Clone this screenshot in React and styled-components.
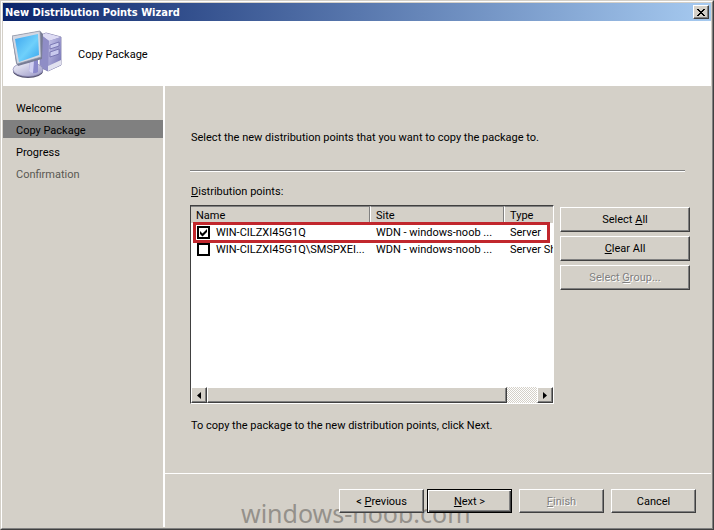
import React, { useState } from "react";
import styled, { createGlobalStyle, css } from "styled-components";

const FACE = "#d4d0c8";
const SHADOW = "#808080";
const DARK = "#404040";

const GlobalStyle = createGlobalStyle`
  * { box-sizing: border-box; }
  body {
    margin: 0;
    background: ${FACE};
    color: #000;
    font: 11px/14px Roboto, "Liberation Sans", sans-serif;
  }
  button, input, table { font: inherit; color: inherit; }
`;

const raised = css`
  border: 1px solid;
  border-color: #fff ${DARK} ${DARK} #fff;
  box-shadow: inset -1px -1px 0 ${SHADOW};
  background: ${FACE};
`;

const Frame = styled.div`
  min-height: 100vh;
  display: flex;
  border: 1px solid;
  border-color: ${FACE} ${DARK} ${DARK} ${FACE};
`;

const Window = styled.div`
  flex: 1;
  min-width: 0;
  display: flex;
  flex-direction: column;
  padding: 1px;
  border: 1px solid;
  border-color: #fff ${SHADOW} ${SHADOW} #fff;
`;

const TitleBar = styled.header`
  display: flex;
  align-items: center;
  justify-content: space-between;
  height: 18px;
  padding: 0 2px;
  background: linear-gradient(90deg, #0a246a, #a6caf0);
`;

const Title = styled.h1`
  margin: 0;
  padding-top: 1px;
  color: #fff;
  font: bold 11px/16px "DejaVu Sans Condensed", "DejaVu Sans", sans-serif;
`;

const CloseButton = styled.button`
  ${raised}
  display: grid;
  place-items: center;
  width: 16px;
  height: 14px;
  padding: 0;
`;

const Banner = styled.div`
  display: flex;
  align-items: center;
  gap: 14px;
  height: 65px;
  padding: 2px 8px 0 9px;
  background: #fff;
`;

const Step = styled.h2`
  margin: 0;
  padding-top: 1px;
  font-size: 11px;
  font-weight: normal;
`;

const Body = styled.div`
  flex: 1;
  display: flex;
`;

const Sidebar = styled.nav`
  flex: none;
  width: 162px;
  padding-top: 12px;
  border-right: 2px solid #fff;
`;

const Steps = styled.ol`
  margin: 0;
  padding: 0;
  list-style: none;
  display: grid;
  gap: 4px;
`;

const StepItem = styled.li`
  padding: 4px 12px 0 13px;
  color: ${(p) => (p.$dim ? "#5a5853" : "#000")};
  background: ${(p) => (p.$current ? SHADOW : "transparent")};
`;

const Content = styled.div`
  flex: 1;
  min-width: 0;
  display: flex;
  flex-direction: column;
`;

const Main = styled.main`
  flex: 1;
  padding: 45px 21px 0 25px;
`;

const Text = styled.p`
  margin: 0;
  padding-left: 1px;
`;

const Rule = styled.hr`
  margin: 25px 5px 13px 0;
  border: 0;
  border-top: 1px solid ${SHADOW};
  border-bottom: 1px solid #fff;
`;

const Picker = styled.div`
  display: flex;
  gap: 6px;
  margin: 6px 0 15px;
`;

const List = styled.div`
  position: relative;
  flex: 1;
  min-width: 0;
  height: 199px;
  display: flex;
  flex-direction: column;
  overflow: hidden;
  background: #fff;
  border: 1px solid;
  border-color: ${DARK} #fff #fff ${DARK};
  box-shadow: inset 0 1px 0 ${SHADOW};
`;

const Table = styled.table`
  width: 100%;
  table-layout: fixed;
  border-collapse: separate;
  border-spacing: 0;
`;

const HeadCell = styled.th`
  width: ${(p) => p.$width || "auto"};
  height: 17px;
  padding: 2px 5px 0;
  text-align: left;
  font-weight: normal;
  line-height: 14px;
  background: ${FACE};
  border-top: 1px solid ${SHADOW};
  border-right: ${(p) => (p.$width ? `1px solid ${SHADOW}` : "0")};
  border-left: ${(p) => (p.$first ? "0" : "1px solid #fff")};
`;

const Cell = styled.td`
  height: 17px;
  padding: 2px 0 0 6px;
  line-height: 15px;
  overflow: hidden;
  white-space: nowrap;
`;

const CheckLabel = styled.label`
  display: flex;
  align-items: center;
  gap: 6px;
`;

const Check = styled.input`
  appearance: none;
  flex: none;
  width: 13px;
  height: 13px;
  margin: 0;
  border: 2px solid #000;
  background: #fff;
  &:checked {
    background: #fff
      url("data:image/svg+xml,%3Csvg xmlns='http://www.w3.org/2000/svg' viewBox='0 0 9 9'%3E%3Cpath d='M1 3L3.5 5.5L8 1V4L3.5 8.5L1 6z'/%3E%3C/svg%3E")
      center / 9px 9px no-repeat;
  }
`;

const Highlight = styled.div`
  position: absolute;
  top: 16px;
  left: 2px;
  right: 3px;
  height: 21px;
  border: 3px solid #c1272d;
  pointer-events: none;
`;

const ScrollBar = styled.div`
  display: flex;
  height: 16px;
  margin-top: auto;
  background: repeating-conic-gradient(#fff 0 25%, ${FACE} 0 50%) 0 0 / 2px 2px;
`;

const ScrollArrow = styled.button`
  ${raised}
  display: grid;
  place-items: center;
  width: 16px;
  height: 16px;
  padding: 0;
`;

const Track = styled.div`
  flex: 1;
`;

const Thumb = styled.div`
  ${raised}
  width: 91%;
  height: 16px;
`;

const Actions = styled.div`
  flex: none;
  width: 130px;
  padding-top: 2px;
  display: flex;
  flex-direction: column;
  gap: 4px;
`;

const Button = styled.button`
  ${raised}
  position: relative;
  width: ${(p) => (p.$wide ? "100%" : "85px")};
  height: ${(p) => (p.$wide ? "25px" : "24px")};
  padding: 1px 0 0;
  line-height: 14px;
  ${(p) =>
    p.$primary &&
    css`
      border-color: #000;
      box-shadow: inset 1px 1px 0 #fff, inset -1px -1px 0 ${DARK}, inset -2px -2px 0 ${SHADOW};
    `}
  &:disabled {
    color: ${SHADOW};
    text-shadow: 1px 1px 0 #fff;
  }
`;

const Footer = styled.footer`
  position: relative;
  display: flex;
  justify-content: flex-end;
  gap: 7px;
  height: 54px;
  padding: 15px 15px 0 0;
  border-top: 1px solid #fff;
`;

const Pair = styled.div`
  display: flex;
  gap: 3px;
`;

const Watermark = styled.div`
  position: absolute;
  left: 76px;
  bottom: -3px;
  color: #94918b;
  font: 25px/34px "Noto Sans", "Open Sans", sans-serif;
`;

function ComputerIcon() {
  return (
    <svg width="52" height="50" viewBox="0 0 52 50" aria-hidden="true">
      <defs>
        <linearGradient id="screen" x1="0" y1="0" x2="1" y2="1">
          <stop offset="0" stopColor="#3da5ee" />
          <stop offset=".55" stopColor="#6fd0fb" />
          <stop offset="1" stopColor="#36a4ee" />
        </linearGradient>
        <linearGradient id="side" x1="0" y1="0" x2="1" y2="1">
          <stop offset="0" stopColor="#c9c8ec" />
          <stop offset="1" stopColor="#706eb0" />
        </linearGradient>
        <linearGradient id="base" x1="0" y1="0" x2="1" y2="1">
          <stop offset="0" stopColor="#f6f6fc" />
          <stop offset="1" stopColor="#9896c5" />
        </linearGradient>
      </defs>
      <path d="M29 5L34 3L49 7V35L36 41L28 37Z" fill="#8583bd" stroke="#5e5c91" strokeWidth=".7" />
      <path d="M29 5L34 3L49 7L37 11Z" fill="#dedcf4" />
      <path d="M29 5L37 11L36 41L28 37Z" fill="#8f8dc6" />
      <path d="M37 11L49 7V35L36 41Z" fill="url(#side)" />
      <path d="M38 15L47 12V16L38 19ZM38 22L47 19V24L38 27Z" fill="#c8c9ed" stroke="#6c6aa9" strokeWidth=".8" />
      <path d="M36 36L49 30V35L36 41Z" fill="#e1e1ef" />
      <ellipse cx="16" cy="41" rx="15" ry="7" fill="#55536f" />
      <ellipse cx="16" cy="39.5" rx="15" ry="7" fill="url(#base)" stroke="#8987b3" strokeWidth=".7" />
      <path d="M18 32L26 29L26 42Q21 45 17 41Z" fill="#8b89cb" />
      <path d="M18 32L22 31L21 43Q18 43 17 41Z" fill="#d1d0f1" />
      <path d="M0 6L28 1L31 4L30 29L6 36L4 33Z" fill="#777b94" />
      <path d="M0 6L28 1L29 27L5 34Z" fill="#d3d7e2" stroke="#8d93a5" strokeWidth=".7" />
      <path d="M3 9L26 4L27 25L7 32Z" fill="url(#screen)" />
    </svg>
  );
}

const POINTS = [
  { name: "WIN-CILZXI45G1Q", site: "WDN - windows-noob ...", type: "Server" },
  { name: "WIN-CILZXI45G1Q\\SMSPXEI...", site: "WDN - windows-noob ...", type: "Server Share" },
];

export default function App() {
  const [checked, setChecked] = useState([true, false]);
  const toggle = (i) => setChecked(checked.map((v, n) => (n === i ? !v : v)));

  return (
    <>
      <GlobalStyle />
      <Frame>
        <Window>
          <TitleBar>
            <Title>New Distribution Points Wizard</Title>
            <CloseButton type="button" aria-label="Close">
              <svg width="8" height="7" viewBox="0 0 8 7" shapeRendering="crispEdges" aria-hidden="true">
                <path d="M0 0h2v1h1v1h2v-1h1v-1h2v1h-1v1h-1v1h-1v1h1v1h1v1h1v1h-2v-1h-1v-1h-2v1h-1v1h-2v-1h1v-1h1v-1h1v-1h-1v-1h-1v-1h-1z" />
              </svg>
            </CloseButton>
          </TitleBar>
          <Banner>
            <ComputerIcon />
            <Step>Copy Package</Step>
          </Banner>
          <Body>
            <Sidebar aria-label="Wizard steps">
              <Steps>
                <StepItem>Welcome</StepItem>
                <StepItem $current aria-current="step">Copy Package</StepItem>
                <StepItem>Progress</StepItem>
                <StepItem $dim>Confirmation</StepItem>
              </Steps>
            </Sidebar>
            <Content>
              <Main>
                <Text>Select the new distribution points that you want to copy the package to.</Text>
                <Rule />
                <Text id="points-label"><u>D</u>istribution points:</Text>
                <Picker>
                  <List>
                    <Table aria-labelledby="points-label">
                      <thead>
                        <tr>
                          <HeadCell $first $width="179px">Name</HeadCell>
                          <HeadCell $width="134px">Site</HeadCell>
                          <HeadCell>Type</HeadCell>
                        </tr>
                      </thead>
                      <tbody>
                        {POINTS.map((p, i) => (
                          <tr key={p.name}>
                            <Cell>
                              <CheckLabel>
                                <Check type="checkbox" checked={checked[i]} onChange={() => toggle(i)} />
                                {p.name}
                              </CheckLabel>
                            </Cell>
                            <Cell>{p.site}</Cell>
                            <Cell>{p.type}</Cell>
                          </tr>
                        ))}
                      </tbody>
                    </Table>
                    <Highlight />
                    <ScrollBar>
                      <ScrollArrow type="button" aria-label="Scroll left">
                        <svg width="4" height="7" viewBox="0 0 4 7" aria-hidden="true"><path d="M4 0V7L0 3.5z" /></svg>
                      </ScrollArrow>
                      <Track><Thumb /></Track>
                      <ScrollArrow type="button" aria-label="Scroll right">
                        <svg width="4" height="7" viewBox="0 0 4 7" aria-hidden="true"><path d="M0 0V7L4 3.5z" /></svg>
                      </ScrollArrow>
                    </ScrollBar>
                  </List>
                  <Actions>
                    <Button type="button" $wide onClick={() => setChecked([true, true])}>Select <u>A</u>ll</Button>
                    <Button type="button" $wide onClick={() => setChecked([false, false])}><u>C</u>lear All</Button>
                    <Button type="button" $wide disabled>Select <u>G</u>roup...</Button>
                  </Actions>
                </Picker>
                <Text>To copy the package to the new distribution points, click Next.</Text>
              </Main>
              <Footer>
                <Watermark>windows-noob.com</Watermark>
                <Pair>
                  <Button type="button">&lt; <u>P</u>revious</Button>
                  <Button type="button" $primary><u>N</u>ext &gt;</Button>
                </Pair>
                <Button type="button" disabled><u>F</u>inish</Button>
                <Button type="button">Cancel</Button>
              </Footer>
            </Content>
          </Body>
        </Window>
      </Frame>
    </>
  );
}
